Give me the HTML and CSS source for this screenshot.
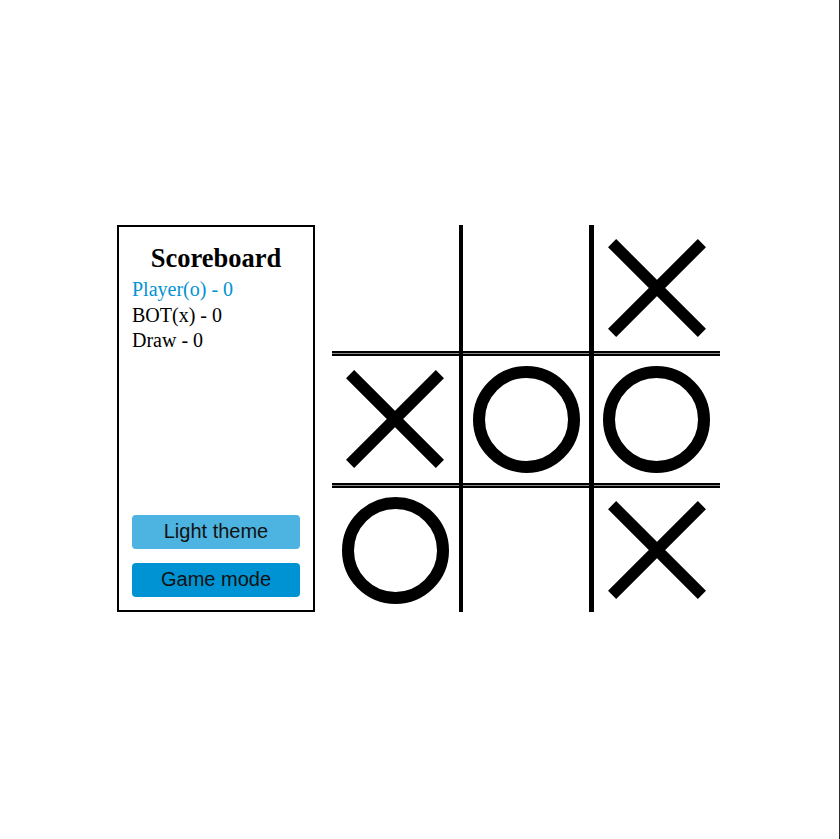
FILE: index.html
```html
<!DOCTYPE html>
<html lang="en">
<head>
<meta charset="utf-8">
<title>Tic Tac Toe</title>
<link rel="stylesheet" href="styles.css">
</head>
<body>
<main class="game">
  <section class="scoreboard">
    <h1 class="title">Scoreboard</h1>
    <div class="score score-player">Player(o) - 0</div>
    <div class="score">BOT(x) - 0</div>
    <div class="score">Draw - 0</div>
    <div class="actions">
      <button class="btn btn-light">Light theme</button>
      <button class="btn btn-mode">Game mode</button>
    </div>
  </section>
  <section class="board">
    <div class="cell r0"></div>
    <div class="cell r0"></div>
    <div class="cell r0"><svg class="mark mark-x" viewBox="0 0 98 98"><path d="M4.1 4.1 L93.9 93.9 M93.9 4.1 L4.1 93.9" /></svg></div>
    <div class="cell r1"><svg class="mark mark-x" viewBox="0 0 98 98"><path d="M4.1 4.1 L93.9 93.9 M93.9 4.1 L4.1 93.9" /></svg></div>
    <div class="cell r1"><svg class="mark mark-o" viewBox="0 0 107 107"><circle cx="53.5" cy="53.5" r="47.5" /></svg></div>
    <div class="cell r1"><svg class="mark mark-o" viewBox="0 0 107 107"><circle cx="53.5" cy="53.5" r="47.5" /></svg></div>
    <div class="cell r2"><svg class="mark mark-o" viewBox="0 0 107 107"><circle cx="53.5" cy="53.5" r="47.5" /></svg></div>
    <div class="cell r2"></div>
    <div class="cell r2"><svg class="mark mark-x" viewBox="0 0 98 98"><path d="M4.1 4.1 L93.9 93.9 M93.9 4.1 L4.1 93.9" /></svg></div>
  </section>
</main>
</body>
</html>
```
FILE: styles.css
```css
html {
  border-right: 1px solid #2b2b2b;
  background: #fff;
}
body {
  margin: 0;
  min-height: 100vh;
  display: flex;
  align-items: center;
  justify-content: center;
  font-family: "Liberation Serif", "Times New Roman", serif;
  color: #000;
}
.game {
  display: flex;
  align-items: stretch;
  gap: 17px;
  transform: translate(-1px, -1px);
}
.scoreboard {
  box-sizing: border-box;
  width: 198px;
  height: 387px;
  border: 2px solid #000;
  padding: 16.5px 13px 13px 13px;
  display: flex;
  flex-direction: column;
}
.title {
  margin: 0 0 4.5px 0;
  font-size: 26.5px;
  font-weight: bold;
  text-align: center;
  line-height: 29px;
}
.score {
  font-size: 20px;
  line-height: 25.5px;
}
.score-player {
  color: #0093d3;
}
.actions {
  margin-top: auto;
  display: flex;
  flex-direction: column;
  gap: 13.5px;
}
.btn {
  display: block;
  width: 100%;
  height: 34.5px;
  border: none;
  border-radius: 4px;
  font-family: "Liberation Sans", Arial, sans-serif;
  font-size: 20px;
  color: #111;
  padding: 0;
}
.btn-light {
  background: #4db3e0;
}
.btn-mode {
  background: #0093d3;
}
.board {
  display: grid;
  grid-template-columns: 126.5px 126.5px 126.5px;
  grid-template-rows: 128px 130.5px 127.5px;
  column-gap: 4.25px;
  row-gap: 1px;
  width: 388px;
  height: 387px;
  background: linear-gradient(to right,
    #8a8a8a 0 126.5px,
    #000 126.5px 130.75px,
    #8a8a8a 130.75px 257.25px,
    #000 257.25px 261.5px,
    #8a8a8a 261.5px);
}
.cell {
  box-sizing: border-box;
  background: #fff;
  display: flex;
  align-items: center;
  justify-content: center;
}
.r0 {
  border-bottom: 2px solid #000;
}
.r1 {
  border-top: 2px solid #000;
  border-bottom: 2px solid #000;
}
.r2 {
  border-top: 2px solid #000;
}
.mark {
  display: block;
  fill: none;
  stroke: #000;
}
.mark-x {
  width: 98px;
  height: 98px;
}
.mark-x path {
  stroke-width: 11.5;
}
.mark-o {
  width: 107px;
  height: 107px;
}
.mark-o circle {
  stroke-width: 12;
}
```
